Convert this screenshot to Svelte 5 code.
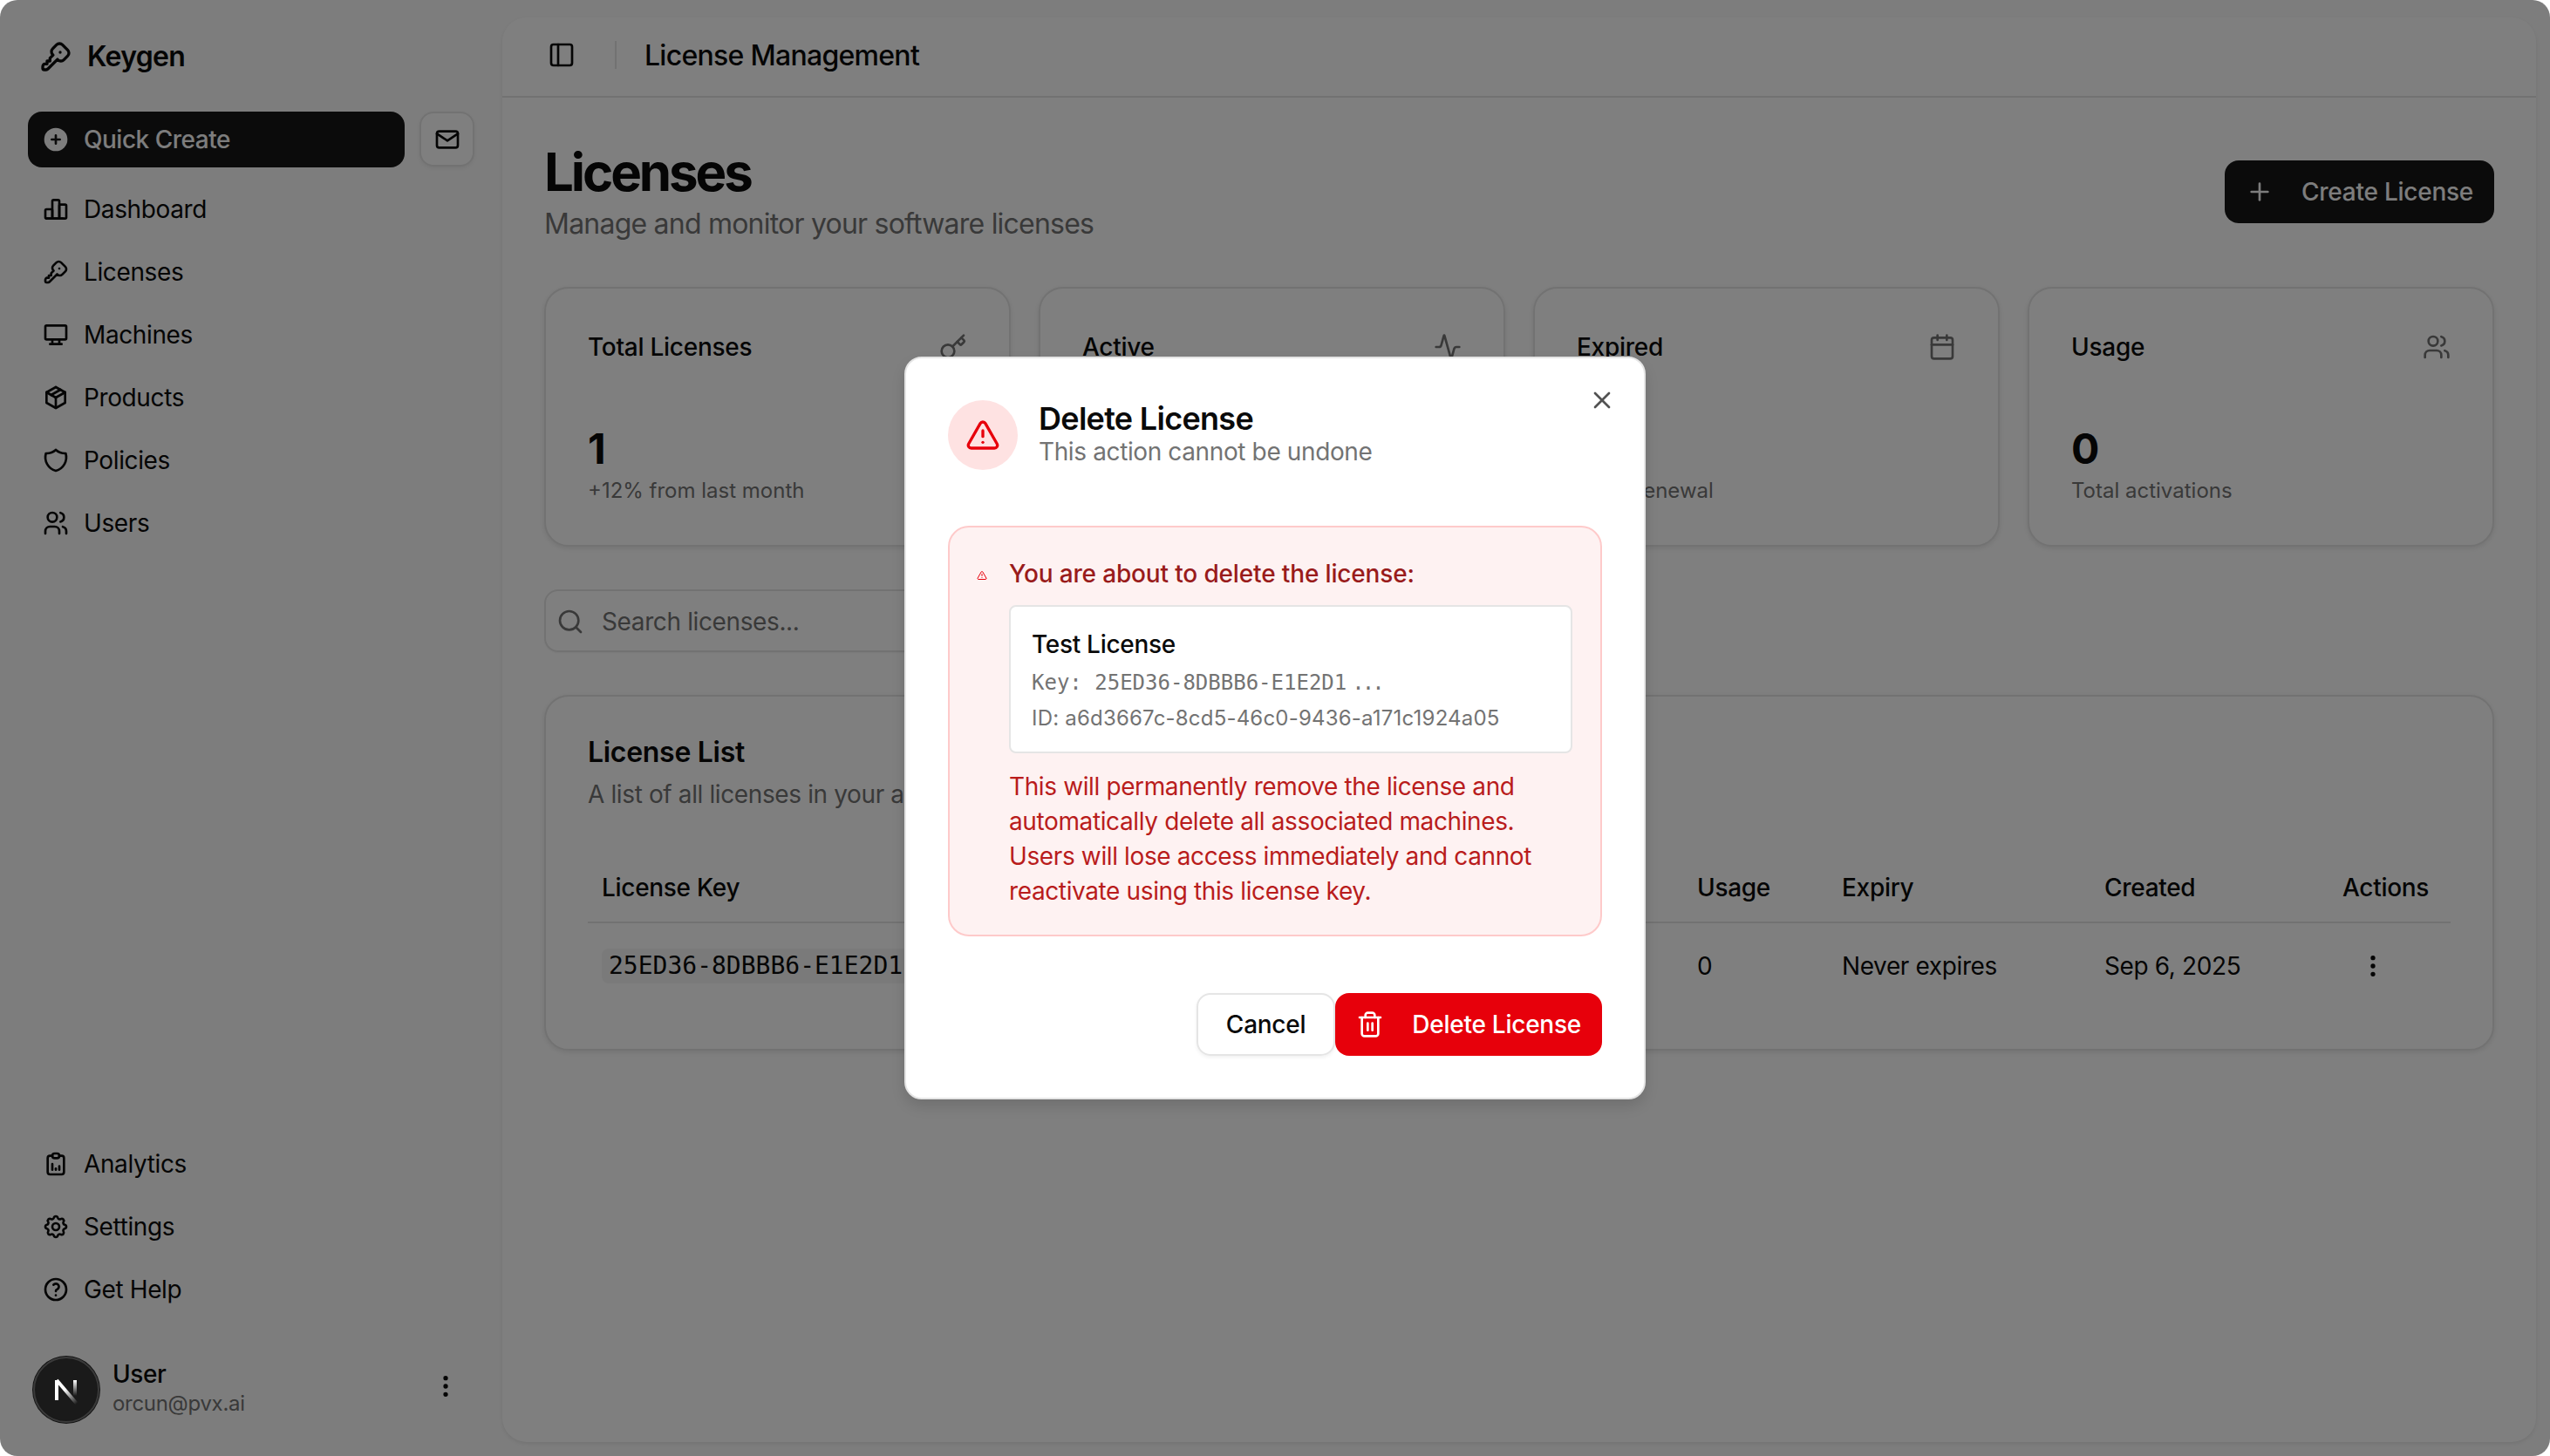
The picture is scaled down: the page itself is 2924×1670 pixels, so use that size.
<script>
  const icons = {
    key: ['M16.555 3.843l3.602 3.602a2.877 2.877 0 0 1 0 4.069l-2.643 2.643a2.877 2.877 0 0 1 -4.069 0l-.301 -.301l-6.558 6.558a2 2 0 0 1 -1.239 .578l-.175 .008h-1.172a1 1 0 0 1 -.993 -.883l-.007 -.117v-1.172a2 2 0 0 1 .467 -1.284l.119 -.13l.414 -.414h2v-2h2v-2l2.144 -2.144l-.301 -.301a2.877 2.877 0 0 1 0 -4.069l2.643 -2.643a2.877 2.877 0 0 1 4.069 0z', 'M15 9h.01'],
    chart: ['M3 13a1 1 0 0 1 1 -1h4a1 1 0 0 1 1 1v6a1 1 0 0 1 -1 1h-4a1 1 0 0 1 -1 -1z', 'M15 9a1 1 0 0 1 1 -1h4a1 1 0 0 1 1 1v10a1 1 0 0 1 -1 1h-4a1 1 0 0 1 -1 -1z', 'M9 5a1 1 0 0 1 1 -1h4a1 1 0 0 1 1 1v14a1 1 0 0 1 -1 1h-4a1 1 0 0 1 -1 -1z', 'M4 20h14'],
    desktop: ['M3 5a1 1 0 0 1 1 -1h16a1 1 0 0 1 1 1v10a1 1 0 0 1 -1 1h-16a1 1 0 0 1 -1 -1v-10z', 'M7 20h10', 'M9 16v4', 'M15 16v4'],
    pack: ['M12 3l8 4.5l0 9l-8 4.5l-8 -4.5l0 -9l8 -4.5', 'M12 12l8 -4.5', 'M12 12l0 9', 'M12 12l-8 -4.5', 'M16 5.25l-8 4.5'],
    shield: ['M12 3a12 12 0 0 0 8.5 3a12 12 0 0 1 -8.5 15a12 12 0 0 1 -8.5 -15a12 12 0 0 0 8.5 -3'],
    users: ['M9 7m-4 0a4 4 0 1 0 8 0a4 4 0 1 0 -8 0', 'M3 21v-2a4 4 0 0 1 4 -4h4a4 4 0 0 1 4 4v2', 'M16 3.13a4 4 0 0 1 0 7.75', 'M21 21v-2a4 4 0 0 0 -3 -3.85'],
    report: ['M9 5h-2a2 2 0 0 0 -2 2v12a2 2 0 0 0 2 2h10a2 2 0 0 0 2 -2v-12a2 2 0 0 0 -2 -2h-2', 'M9 3m0 2a2 2 0 0 1 2 -2h2a2 2 0 0 1 2 2v0a2 2 0 0 1 -2 2h-2a2 2 0 0 1 -2 -2z', 'M9 17v-5', 'M12 17v-1', 'M15 17v-3'],
    gear: ['M10.325 4.317c.426 -1.756 2.924 -1.756 3.35 0a1.724 1.724 0 0 0 2.573 1.066c1.543 -.94 3.31 .826 2.37 2.37a1.724 1.724 0 0 0 1.065 2.572c1.756 .426 1.756 2.924 0 3.35a1.724 1.724 0 0 0 -1.066 2.573c.94 1.543 -.826 3.31 -2.37 2.37a1.724 1.724 0 0 0 -2.572 1.065c-.426 1.756 -2.924 1.756 -3.35 0a1.724 1.724 0 0 0 -2.573 -1.066c-1.543 .94 -3.31 -.826 -2.37 -2.37a1.724 1.724 0 0 0 -1.065 -2.572c-1.756 -.426 -1.756 -2.924 0 -3.35a1.724 1.724 0 0 0 1.066 -2.573c-.94 -1.543 .826 -3.31 2.37 -2.37c1 .608 2.296 .07 2.572 -1.065z', 'M9 12a3 3 0 1 0 6 0a3 3 0 0 0 -6 0'],
    help: ['M12 12m-9 0a9 9 0 1 0 18 0a9 9 0 1 0 -18 0', 'M12 17l0 .01', 'M12 13.5a1.5 1.5 0 0 1 1 -1.5a2.6 2.6 0 1 0 -3 -4'],
    mail: ['M3 7a2 2 0 0 1 2 -2h14a2 2 0 0 1 2 2v10a2 2 0 0 1 -2 2h-14a2 2 0 0 1 -2 -2v-10z', 'M3 7l9 6l9 -6'],
    dots: ['M12 12m-1 0a1 1 0 1 0 2 0a1 1 0 1 0 -2 0', 'M12 19m-1 0a1 1 0 1 0 2 0a1 1 0 1 0 -2 0', 'M12 5m-1 0a1 1 0 1 0 2 0a1 1 0 1 0 -2 0'],
    panel: ['M5 3h14a2 2 0 0 1 2 2v14a2 2 0 0 1-2 2H5a2 2 0 0 1-2-2V5a2 2 0 0 1 2-2z', 'M9 3v18'],
    plus: ['M5 12h14', 'M12 5v14'],
    search: ['M3 11a8 8 0 1 0 16 0a8 8 0 1 0 -16 0', 'm21 21-4.3-4.3'],
    cardKey: ['m15.5 7.5 2.3 2.3a1 1 0 0 0 1.4 0l2.1-2.1a1 1 0 0 0 0-1.4L19 4', 'm21 2-9.6 9.6', 'M2 15.5a5.5 5.5 0 1 0 11 0a5.5 5.5 0 1 0 -11 0'],
    activity: ['M22 12h-2.48a2 2 0 0 0-1.93 1.46l-2.35 8.36a.25.25 0 0 1-.48 0L9.24 2.18a.25.25 0 0 0-.48 0l-2.35 8.36A2 2 0 0 1 4.49 12H2'],
    calendar: ['M8 2v4', 'M16 2v4', 'M5 4h14a2 2 0 0 1 2 2v14a2 2 0 0 1-2 2H5a2 2 0 0 1-2-2V6a2 2 0 0 1 2-2z', 'M3 10h18'],
    cardUsers: ['M16 21v-2a4 4 0 0 0-4-4H6a4 4 0 0 0-4 4v2', 'M16 3.128a4 4 0 0 1 0 7.744', 'M22 21v-2a4 4 0 0 0-3-3.87', 'M5 7a4 4 0 1 0 8 0a4 4 0 1 0 -8 0'],
    alert: ['m21.73 18-8-14a2 2 0 0 0-3.48 0l-8 14A2 2 0 0 0 4 21h16a2 2 0 0 0 1.73-3', 'M12 9v4', 'M12 17h.01'],
    close: ['M18 6 6 18', 'm6 6 12 12'],
    trash: ['M3 6h18', 'M19 6v14c0 1-1 2-2 2H7c-1 0-2-1-2-2V6', 'M8 6V4c0-1 1-2 2-2h4c1 0 2 1 2 2v2', 'M10 11v6', 'M14 11v6']
  };

  const mainNav = [
    { label: 'Dashboard', icon: 'chart' },
    { label: 'Licenses', icon: 'key' },
    { label: 'Machines', icon: 'desktop' },
    { label: 'Products', icon: 'pack' },
    { label: 'Policies', icon: 'shield' },
    { label: 'Users', icon: 'users' }
  ];

  const bottomNav = [
    { label: 'Analytics', icon: 'report' },
    { label: 'Settings', icon: 'gear' },
    { label: 'Get Help', icon: 'help' }
  ];

  const stats = [
    { title: 'Total Licenses', icon: 'cardKey', value: '1', note: '+12% from last month' },
    { title: 'Active', icon: 'activity', value: '1', note: 'Currently active' },
    { title: 'Expired', icon: 'calendar', value: '0', note: 'Need renewal' },
    { title: 'Usage', icon: 'cardUsers', value: '0', note: 'Total activations' }
  ];
</script>

{#snippet icon(name, size = 32)}
  <svg class="icon" width={size} height={size} viewBox="0 0 24 24" fill="none" stroke="currentColor" stroke-width="2" stroke-linecap="round" stroke-linejoin="round">
    {#each icons[name] as d}
      <path {d} />
    {/each}
  </svg>
{/snippet}

<div class="window">
  <aside class="sidebar">
    <div class="brand">
      {@render icon('key', 40)}
      <span>Keygen</span>
    </div>

    <div class="quick-row">
      <button class="quick-create">
        <svg class="icon" width="32" height="32" viewBox="0 0 24 24">
          <circle cx="12" cy="12" r="10" fill="currentColor" />
          <path d="M12 8.5v7M8.5 12h7" stroke="#171717" stroke-width="2" stroke-linecap="round" />
        </svg>
        <span>Quick Create</span>
      </button>
      <button class="mail-btn">{@render icon('mail')}</button>
    </div>

    <nav class="nav">
      {#each mainNav as item}
        <div class="nav-item">{@render icon(item.icon)}<span>{item.label}</span></div>
      {/each}
    </nav>

    <nav class="nav bottom">
      {#each bottomNav as item}
        <div class="nav-item">{@render icon(item.icon)}<span>{item.label}</span></div>
      {/each}
    </nav>

    <div class="user-row">
      <div class="avatar">
        <svg width="72" height="72" viewBox="0 0 72 72" fill="none">
          <defs>
            <linearGradient id="fadeRight" x1="0" y1="0" x2="0" y2="1">
              <stop offset="0" stop-color="#fff" />
              <stop offset="1" stop-color="#fff" stop-opacity="0" />
            </linearGradient>
            <linearGradient id="fadeDiag" gradientUnits="userSpaceOnUse" x1="34" y1="36" x2="48" y2="52">
              <stop offset="0" stop-color="#fff" />
              <stop offset="1" stop-color="#fff" stop-opacity="0" />
            </linearGradient>
          </defs>
          <rect x="23" y="25" width="4" height="23" fill="#fff" />
          <rect x="44" y="25" width="4" height="18" fill="url(#fadeRight)" />
          <line x1="25" y1="25" x2="48" y2="52" stroke="url(#fadeDiag)" stroke-width="4" />
        </svg>
      </div>
      <div class="user-text">
        <span class="user-name">User</span>
        <span class="user-mail">orcun@pvx.ai</span>
      </div>
      <span class="user-more">{@render icon('dots')}</span>
    </div>
  </aside>

  <main class="inset">
    <header class="topbar">
      {@render icon('panel')}
      <span class="topbar-sep"></span>
      <span class="topbar-title">License Management</span>
    </header>

    <div class="content">
      <div class="page-head">
        <div>
          <h1>Licenses</h1>
          <p>Manage and monitor your software licenses</p>
        </div>
        <button class="btn-primary">{@render icon('plus')}<span>Create License</span></button>
      </div>

      <div class="stats">
        {#each stats as card}
          <div class="card stat">
            <div class="stat-head">
              <span>{card.title}</span>
              <span class="stat-icon">{@render icon(card.icon)}</span>
            </div>
            <div class="stat-value">{card.value}</div>
            <div class="stat-note">{card.note}</div>
          </div>
        {/each}
      </div>

      <div class="search">
        {@render icon('search')}
        <span>Search licenses...</span>
      </div>

      <section class="card list">
        <h2>License List</h2>
        <p>A list of all licenses in your account</p>

        <div class="row head">
          <span>License Key</span>
          <span>Usage</span>
          <span>Expiry</span>
          <span>Created</span>
          <span>Actions</span>
        </div>
        <div class="row body">
          <span><code>25ED36-8DBBB6-E1E2D1...</code></span>
          <span>0</span>
          <span>Never expires</span>
          <span>Sep 6, 2025</span>
          <span class="row-more">{@render icon('dots')}</span>
        </div>
      </section>
    </div>
  </main>

  <div class="overlay">
    <div class="dialog">
      <button class="dialog-close">{@render icon('close')}</button>

      <div class="dialog-head">
        <div class="dialog-badge">{@render icon('alert', 40)}</div>
        <div class="dialog-titles">
          <h3>Delete License</h3>
          <p>This action cannot be undone</p>
        </div>
      </div>

      <div class="warning">
        <span class="warning-icon">{@render icon('alert', 12)}</span>
        <div class="warning-body">
          <div class="warning-title">You are about to delete the license:</div>
          <div class="target">
            <div class="target-name">Test License</div>
            <div class="target-key">Key: 25ED36-8DBBB6-E1E2D1<span class="ellipsis">...</span></div>
            <div class="target-id">ID: a6d3667c-8cd5-46c0-9436-a171c1924a05</div>
          </div>
          <div class="warning-text">
            This will permanently remove the license and automatically delete all associated machines. Users will lose access immediately and cannot reactivate using this license key.
          </div>
        </div>
      </div>

      <div class="dialog-foot">
        <button class="btn-cancel">Cancel</button>
        <button class="btn-danger">{@render icon('trash')}<span>Delete License</span></button>
      </div>
    </div>
  </div>
</div>

<style>
  :global(body) {
    margin: 0;
    background: #fff;
  }

  .window {
    position: relative;
    display: flex;
    width: 2924px;
    height: 1670px;
    overflow: hidden;
    border-radius: 20px;
    background: #fafafa;
    color: #0a0a0a;
    font-family: Inter, "Liberation Sans", sans-serif;
    font-size: 28px;
    line-height: 40px;
    letter-spacing: -0.38px;
  }

  .icon {
    display: block;
    flex-shrink: 0;
  }

  button {
    border: 0;
    padding: 0;
    font: inherit;
    color: inherit;
    letter-spacing: -0.25px;
    background: none;
  }

  h1, h2, h3, p {
    margin: 0;
  }

  /* Sidebar */
  .sidebar {
    flex: 0 0 576px;
    display: flex;
    flex-direction: column;
    padding: 33px 32px 38px;
    box-sizing: border-box;
  }

  .brand {
    display: flex;
    align-items: center;
    gap: 16px;
    height: 64px;
    padding-left: 12px;
    font-size: 32px;
    font-weight: 600;
    letter-spacing: -0.7px;
  }

  .quick-row {
    display: flex;
    gap: 17px;
    margin-top: 31px;
    margin-bottom: 16px;
  }

  .quick-create {
    display: flex;
    align-items: center;
    gap: 16px;
    width: 432px;
    height: 64px;
    padding: 0 16px;
    box-sizing: border-box;
    border-radius: 16px;
    background: #171717;
    color: #fafafa;
    font-weight: 500;
    letter-spacing: -0.5px;
  }

  .mail-btn {
    display: flex;
    align-items: center;
    justify-content: center;
    width: 63px;
    height: 63px;
    box-sizing: border-box;
    border: 2px solid #e5e5e5;
    border-radius: 16px;
    background: #fff;
    box-shadow: 0 2px 4px rgba(0, 0, 0, 0.06);
  }

  .nav {
    display: flex;
    flex-direction: column;
    gap: 8px;
  }

  .nav.bottom {
    margin-top: auto;
  }

  .nav-item {
    display: flex;
    align-items: center;
    gap: 16px;
    height: 64px;
    padding: 0 16px;
  }

  .user-row {
    display: flex;
    align-items: center;
    margin-top: 45px;
    padding-left: 6px;
  }

  .avatar {
    position: relative;
    z-index: 11;
    width: 76px;
    height: 76px;
    box-sizing: border-box;
    border: 2px solid #3a3a3a;
    border-radius: 50%;
    background: #1a1a1a;
    box-shadow: inset 0 0 0 1px #1a1a1a, 0 0 0 1px #141414;
  }

  .avatar svg {
    display: block;
  }

  .user-text {
    display: flex;
    flex-direction: column;
    margin-left: 15px;
    margin-top: -4px;
  }

  .user-name {
    line-height: 36px;
    font-weight: 500;
  }

  .user-mail {
    font-size: 24px;
    line-height: 32px;
    letter-spacing: -0.3px;
    color: #737373;
  }

  .user-more {
    margin-left: auto;
    margin-right: 17px;
    margin-top: -8px;
  }

  /* Main panel */
  .inset {
    flex: 0 0 2332px;
    height: 1634px;
    margin-top: 20px;
    border-radius: 28px;
    background: #fff;
    box-shadow: 0 2px 4px rgba(0, 0, 0, 0.08);
  }

  .topbar {
    display: flex;
    align-items: center;
    height: 92px;
    box-sizing: border-box;
    padding: 0 0 4px 52px;
    border-bottom: 2px solid #e5e5e5;
  }

  .topbar-sep {
    width: 2px;
    height: 32px;
    margin-left: 45px;
    background: #e5e5e5;
  }

  .topbar-title {
    margin: 2px 0 0 32px;
    font-size: 32px;
    font-weight: 500;
    letter-spacing: -0.72px;
  }

  .content {
    padding: 49px 48px 0 48px;
  }

  .page-head {
    display: flex;
    align-items: center;
    justify-content: space-between;
  }

  h1 {
    font-size: 60px;
    line-height: 72px;
    font-weight: 700;
    letter-spacing: -3.1px;
  }

  .page-head p {
    font-size: 32px;
    line-height: 48px;
    letter-spacing: -0.78px;
    color: #737373;
  }

  .btn-primary {
    display: flex;
    align-items: center;
    gap: 32px;
    height: 72px;
    padding: 0 24px;
    margin-top: -2px;
    border-radius: 16px;
    background: #171717;
    color: #fafafa;
    font-weight: 500;
  }

  .stats {
    display: grid;
    grid-template-columns: repeat(4, 1fr);
    gap: 32px;
    margin-top: 48px;
  }

  .card {
    box-sizing: border-box;
    border: 2px solid #e5e5e5;
    border-radius: 28px;
    background: #fff;
    box-shadow: 0 2px 6px rgba(0, 0, 0, 0.1);
  }

  .stat {
    height: 298px;
    padding: 47px 48px;
  }

  .stat-head {
    display: flex;
    align-items: center;
    justify-content: space-between;
    font-weight: 500;
    letter-spacing: -0.27px;
  }

  .stat-icon {
    color: #737373;
  }

  .stat-value {
    margin-top: 65px;
    font-size: 48px;
    line-height: 64px;
    font-weight: 700;
  }

  .stat-note {
    font-size: 24px;
    line-height: 32px;
    letter-spacing: 0;
    color: #737373;
  }

  .search {
    display: flex;
    align-items: center;
    gap: 20px;
    width: 800px;
    height: 72px;
    box-sizing: border-box;
    margin-top: 49px;
    padding: 2px 16px 0 12px;
    border: 2px solid #e5e5e5;
    border-radius: 16px;
    color: #737373;
    box-shadow: 0 1px 2px rgba(0, 0, 0, 0.05);
  }

  .list {
    height: 408px;
    margin-top: 49px;
    padding: 40px 48px 0;
  }

  h2 {
    font-size: 32px;
    line-height: 48px;
    font-weight: 600;
    letter-spacing: -0.3px;
  }

  .list p {
    margin-top: 4px;
    color: #737373;
  }

  .row {
    display: grid;
    grid-template-columns: 1256px 166px 301px 273px 1fr;
    align-items: center;
  }

  .row > span {
    padding-left: 16px;
  }

  .row.head {
    height: 80px;
    box-sizing: border-box;
    margin-top: 48px;
    border-bottom: 2px solid #e5e5e5;
    font-weight: 500;
    letter-spacing: -0.3px;
  }

  .row.body {
    height: 98px;
  }

  code {
    display: inline-block;
    height: 40px;
    padding: 0 8px;
    border-radius: 8px;
    background: #f5f5f5;
    font-family: "DejaVu Sans Mono", "Liberation Mono", monospace;
    font-size: 28px;
    line-height: 40px;
    letter-spacing: 0;
    vertical-align: top;
  }

  .row-more {
    margin-left: 19px;
  }

  /* Dialog */
  .overlay {
    position: absolute;
    inset: 0;
    z-index: 10;
    display: flex;
    align-items: center;
    justify-content: center;
    background: rgba(0, 0, 0, 0.5);
  }

  .dialog {
    position: relative;
    width: 850px;
    box-sizing: border-box;
    padding: 48px;
    border: 2px solid #e5e5e5;
    border-radius: 20px;
    background: #fff;
    box-shadow: 0 8px 16px rgba(0, 0, 0, 0.12);
  }

  .dialog-close {
    position: absolute;
    top: 32px;
    right: 32px;
    display: block;
    opacity: 0.7;
  }

  .dialog-head {
    display: flex;
    align-items: center;
    gap: 24px;
  }

  .dialog-titles {
    padding-bottom: 2px;
  }

  .dialog-badge {
    display: flex;
    align-items: center;
    justify-content: center;
    width: 80px;
    height: 80px;
    border-radius: 50%;
    background: #fee2e2;
    color: #e7000b;
  }

  h3 {
    font-size: 36px;
    line-height: 40px;
    font-weight: 600;
    letter-spacing: -0.7px;
  }

  .dialog-head p {
    line-height: 36px;
    color: #737373;
  }

  .warning {
    display: flex;
    gap: 25px;
    margin-top: 64px;
    padding: 33px 32px 30px 31px;
    border: 2px solid #fecaca;
    border-radius: 24px;
    background: #fef2f2;
  }

  .warning-icon {
    margin-top: 16px;
    color: #e7000b;
  }

  .warning-body {
    flex: 1;
  }

  .warning-title {
    font-weight: 500;
    letter-spacing: -0.15px;
    color: #991b1b;
  }

  .target {
    margin-top: 16px;
    height: 170px;
    box-sizing: border-box;
    padding: 23px 24px 0;
    border: 2px solid #e5e5e5;
    border-radius: 8px;
    background: #fff;
    font-size: 24px;
    line-height: 32px;
    color: #737373;
  }

  .target-name {
    font-size: 28px;
    line-height: 40px;
    font-weight: 500;
    letter-spacing: -0.3px;
    color: #0a0a0a;
  }

  .target-key {
    margin-top: 8px;
    font-family: "DejaVu Sans Mono", "Liberation Mono", monospace;
    letter-spacing: 0;
  }

  .ellipsis {
    margin-left: 6px;
    letter-spacing: -3px;
  }

  .target-id {
    margin-top: 9px;
    letter-spacing: 0.2px;
  }

  .warning-text {
    margin-top: 18px;
    color: #b91c1c;
  }

  .dialog-foot {
    display: flex;
    justify-content: flex-end;
    margin-top: 65px;
  }

  .btn-cancel {
    height: 72px;
    padding: 0 32px;
    box-sizing: border-box;
    border: 2px solid #e5e5e5;
    border-radius: 16px;
    font-weight: 500;
    box-shadow: 0 2px 4px rgba(0, 0, 0, 0.06);
  }

  .btn-danger {
    display: flex;
    align-items: center;
    gap: 32px;
    height: 72px;
    padding: 0 24px;
    border-radius: 16px;
    background: #e7000b;
    color: #fff;
    font-weight: 500;
  }
</style>
